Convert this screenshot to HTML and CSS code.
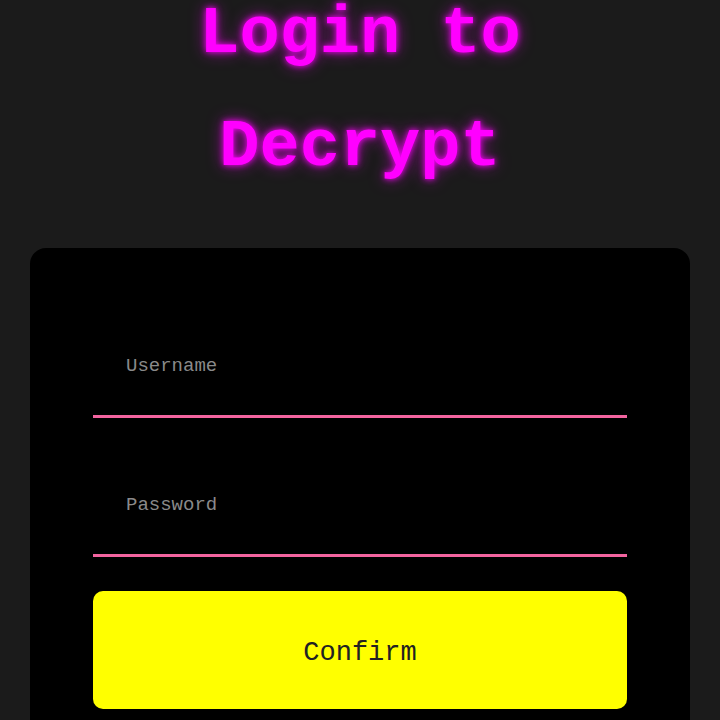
FILE: index.html
```html
<!DOCTYPE html>
<html lang="en">
<head>
<meta charset="utf-8">
<title>Login to Decrypt</title>
<link rel="stylesheet" href="styles.css">
</head>
<body>
  <main class="page">
    <h1 class="title">Login to<br>Decrypt</h1>
    <form class="card">
      <input class="field" type="text" placeholder="Username">
      <input class="field" type="password" placeholder="Password">
      <button class="confirm" type="button">Confirm</button>
    </form>
  </main>
</body>
</html>
```

FILE: styles.css
```css
html, body {
  margin: 0;
  padding: 0;
  background: #1b1b1b;
  height: 100%;
  overflow: hidden;
}

.page {
  padding: 0 30px;
  font-family: "Liberation Mono", monospace;
}

.title {
  margin: -22px 0 44px;
  text-align: center;
  font-family: "Liberation Mono", monospace;
  font-size: 67px;
  font-weight: bold;
  line-height: 113px;
  color: #ff00ff;
  text-shadow: 0 0 6px #ff00ff, 0 0 16px rgba(255, 0, 255, 0.55);
}

.card {
  background: #000;
  border-radius: 16px;
  padding: 69px 63px 60px;
  display: flex;
  flex-direction: column;
}

.field {
  display: block;
  box-sizing: content-box;
  height: 98px;
  padding: 0 0 0 33px;
  margin: 0;
  border: none;
  border-bottom: 3px solid #f2649f;
  background: transparent;
  color: #ccc;
  font-family: "Liberation Mono", monospace;
  font-size: 19px;
  outline: none;
}

.field + .field {
  margin-top: 38px;
}

.field::placeholder {
  color: #8a8a8a;
}

.confirm {
  margin-top: 34px;
  height: 118px;
  padding: 6px 0 0;
  border: none;
  border-radius: 10px;
  background: #ffff00;
  color: #222;
  font-family: "Liberation Mono", monospace;
  font-size: 27px;
}
```
